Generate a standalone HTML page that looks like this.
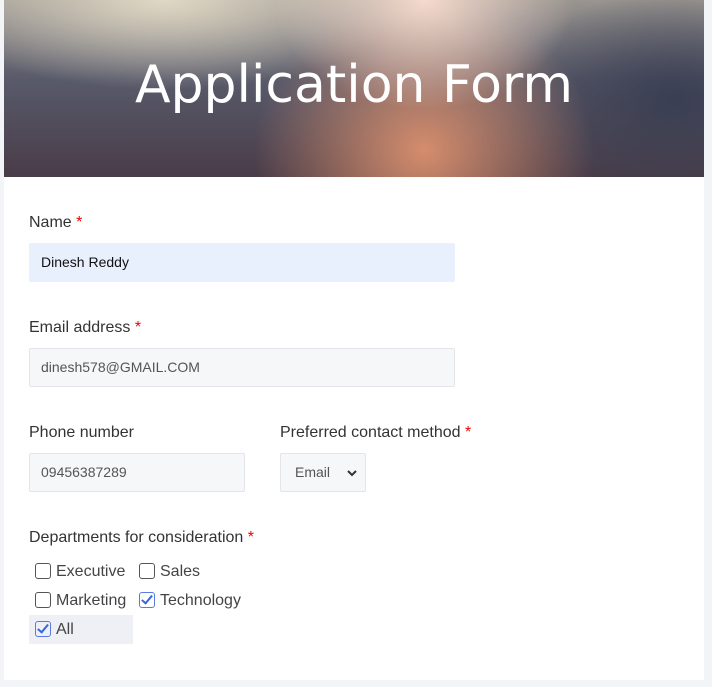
<!DOCTYPE html>
<html><head><meta charset="utf-8"><style>
*{box-sizing:border-box;margin:0;padding:0}
body{width:712px;height:687px;background:#f3f4f8;font-family:"Liberation Sans",sans-serif;color:#333;position:relative;overflow:hidden}
.card{position:absolute;left:4px;top:0;width:700px;height:680px;background:#fff}
.hdr{position:absolute;left:0;top:0;width:700px;height:177px;
background:
radial-gradient(ellipse 150px 110px at 420px 0px, rgba(250,222,208,0.95), rgba(250,222,208,0) 100%),
radial-gradient(ellipse 170px 150px at 420px 150px, rgba(220,145,110,0.95), rgba(220,145,110,0) 100%),
radial-gradient(ellipse 240px 90px at 160px 0px, rgba(228,220,200,0.95), rgba(228,220,200,0) 100%),
radial-gradient(ellipse 170px 110px at 670px 100px, rgba(55,60,80,0.9), rgba(55,60,80,0) 100%),
linear-gradient(180deg,#9a9590 0%,#585a6a 45%,#4a3c48 100%);}
.hdr h1{position:absolute;left:0;right:0;top:55px;text-align:center;color:#fff;font-size:52px;letter-spacing:0px;font-family:"DejaVu Sans","Liberation Sans",sans-serif;font-weight:normal}
.lbl{position:absolute;font-size:16px;color:#333}
.lbl b{color:#e00;font-weight:normal}
.inp{position:absolute;height:39px;border:1px solid #e3e5ea;background:#f6f7f9;border-radius:2px;font-size:14px;color:#555;padding-left:11px;line-height:37px}
.cb{position:absolute;font-size:16px;color:#444;line-height:20px}
.cb i{display:inline-block;width:16px;height:16px;border:1.5px solid #555;border-radius:3px;vertical-align:-3px;margin-right:5px;position:relative}
.cb i.on{border-color:#5a7be0}
.cb i.on:after{content:"";position:absolute;left:4px;top:0px;width:4px;height:9px;border:solid #3a66d8;border-width:0 2px 2px 0;transform:rotate(40deg)}
</style></head><body>
<div class="card">
<div class="hdr"><h1>Application Form</h1></div>
</div>
<div class="lbl" style="left:29px;top:214px">Name <b>*</b></div>
<div class="inp" style="left:29px;top:243px;width:426px;background:#e8f0fd;border-color:#e8f0fd;color:#111">Dinesh Reddy</div>
<div class="lbl" style="left:29px;top:319px">Email address <b>*</b></div>
<div class="inp" style="left:29px;top:348px;width:426px">dinesh578@GMAIL.COM</div>
<div class="lbl" style="left:29px;top:424px">Phone number</div>
<div class="inp" style="left:29px;top:453px;width:216px">09456387289</div>
<div class="lbl" style="left:280px;top:424px">Preferred contact method <b>*</b></div>
<div class="inp" style="left:280px;top:453px;width:86px;padding-left:14px">Email<svg style="position:absolute;left:66px;top:15px" width="10" height="8" viewBox="0 0 10 8"><path d="M1 2l4 4 4-4" stroke="#333" stroke-width="2" fill="none"/></svg></div>
<div class="lbl" style="left:29px;top:529px">Departments for consideration <b>*</b></div>
<div style="position:absolute;left:29px;top:615px;width:104px;height:29px;background:#eef0f6"></div>
<div class="cb" style="left:35px;top:562px"><i></i>Executive</div>
<div class="cb" style="left:139px;top:562px"><i></i>Sales</div>
<div class="cb" style="left:35px;top:591px"><i></i>Marketing</div>
<div class="cb" style="left:139px;top:591px"><i class="on"></i>Technology</div>
<div class="cb" style="left:35px;top:620px"><i class="on"></i>All</div>
</body></html>
